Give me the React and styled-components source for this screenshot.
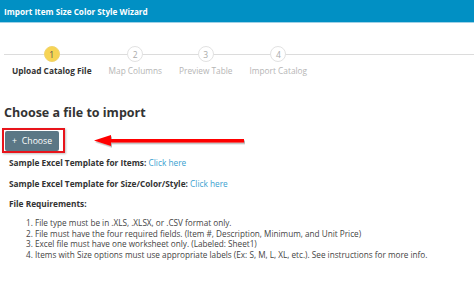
import React from "react";
import styled, { createGlobalStyle } from "styled-components";

const Global = createGlobalStyle`
  html, body { margin: 0; padding: 0; background: #fff; }
  body { font-family: "Open Sans", "Noto Sans", sans-serif; color: #333; overflow: hidden; }
`;

const Page = styled.div`
  width: 474px;
  height: 283px;
  overflow: hidden;
  background: #fff;
`;

const Header = styled.div`
  height: 22px;
  background: #0190c4;
  border-bottom: 1px solid #9fd1e6;
  display: flex;
  align-items: center;
  padding-left: 4px;
  color: #fff;
  font-weight: 700;
  font-size: 8.2px;
`;

const Stepper = styled.div`
  position: relative;
  display: flex;
  gap: 17px;
  padding: 23px 0 0 12px;
  &::before {
    content: "";
    position: absolute;
    left: 4px;
    right: 0;
    top: 31px;
    height: 1px;
    background: #dcdcdc;
  }
`;

const Step = styled.div`
  position: relative;
  display: flex;
  flex-direction: column;
  align-items: center;
  gap: 3px;
`;

const Circle = styled.div`
  width: 14px;
  height: 14px;
  border-radius: 50%;
  border: 1px solid ${(p) => (p.$active ? "#f1d46e" : "#e2e2e2")};
  background: ${(p) => (p.$active ? "#f7d454" : "#fff")};
  color: ${(p) => (p.$active ? "#555" : "#aaa")};
  font-size: 8.5px;
  display: flex;
  align-items: center;
  justify-content: center;
`;

const StepLabel = styled.div`
  font-size: 8.3px;
  line-height: 12px;
  white-space: nowrap;
  font-weight: ${(p) => (p.$active ? 700 : 400)};
  color: ${(p) => (p.$active ? "#333" : "#b5b5b5")};
`;

const Content = styled.div`
  padding: 27px 0 0 4px;
`;

const Heading = styled.h2`
  margin: 0;
  font-size: 12.5px;
  line-height: 18px;
  font-weight: 700;
  color: #333;
`;

const ButtonRow = styled.div`
  display: flex;
  align-items: center;
  gap: 29px;
  margin: 6px 0 0 -2px;
`;

const Highlight = styled.div`
  display: inline-flex;
  border: 2px solid #e8141b;
  padding: 1px 4px 0 1px;
  box-shadow: 1px 1px 2px rgba(0, 0, 0, 0.25);
`;

const ChooseButton = styled.button`
  height: 20px;
  width: 54px;
  border: none;
  border-radius: 2px;
  background: #5b7785;
  color: #fff;
  font-family: inherit;
  font-size: 8.7px;
  display: flex;
  align-items: center;
  justify-content: center;
  gap: 5px;
  padding: 0;
`;

const Info = styled.div`
  padding-left: 5px;
  margin-top: 4px;
`;

const InfoLine = styled.div`
  font-size: 8.3px;
  line-height: 12px;
  font-weight: 700;
  color: #333;
  margin-top: ${(p) => p.$gap}px;
`;

const Link = styled.a`
  font-weight: 400;
  color: #3a9fd0;
  text-decoration: none;
`;

const List = styled.ol`
  margin: 8px 0 0;
  padding-left: 26px;
  font-size: 8.2px;
  line-height: 10.6px;
  color: #444;
`;

const steps = ["Upload Catalog File", "Map Columns", "Preview Table", "Import Catalog"];

const Arrow = () => (
  <svg width="154" height="14" viewBox="0 0 154 14">
    <defs>
      <filter id="sh" x="-5%" y="-50%" width="110%" height="200%">
        <feDropShadow dx="1" dy="1.5" stdDeviation="0.6" floodColor="#000" floodOpacity="0.3" />
      </filter>
    </defs>
    <g filter="url(#sh)">
      <polygon points="0,6.5 17,1 17,5 150,5 150,8.5 17,8.5 17,12" fill="#f00" />
    </g>
  </svg>
);

export default function App() {
  return (
    <Page>
      <Global />
      <Header>Import Item Size Color Style Wizard</Header>
      <Stepper>
        {steps.map((s, i) => (
          <Step key={s}>
            <Circle $active={i === 0}>{i + 1}</Circle>
            <StepLabel $active={i === 0}>{s}</StepLabel>
          </Step>
        ))}
      </Stepper>
      <Content>
        <Heading>Choose a file to import</Heading>
        <ButtonRow>
          <Highlight>
            <ChooseButton>
              <span>+</span>
              <span>Choose</span>
            </ChooseButton>
          </Highlight>
          <Arrow />
        </ButtonRow>
        <Info>
          <InfoLine $gap={3}>
            Sample Excel Template for Items: <Link href="#">Click here</Link>
          </InfoLine>
          <InfoLine $gap={9}>
            Sample Excel Template for Size/Color/Style: <Link href="#">Click here</Link>
          </InfoLine>
          <InfoLine $gap={8}>File Requirements:</InfoLine>
          <List>
            <li>File type must be in .XLS, .XLSX, or .CSV format only.</li>
            <li>File must have the four required fields. (Item #, Description, Minimum, and Unit Price)</li>
            <li>Excel file must have one worksheet only. (Labeled: Sheet1)</li>
            <li>Items with Size options must use appropriate labels (Ex: S, M, L, XL, etc.). See instructions for more info.</li>
          </List>
        </Info>
      </Content>
    </Page>
  );
}
